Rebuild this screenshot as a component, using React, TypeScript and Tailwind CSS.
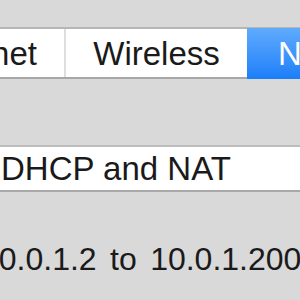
const tabs = [
  { label: 'Ethernet', width: 'w-[183px] -ml-[117px] justify-end pr-[27px] border-r-2 border-[#dedede]' },
  { label: 'Wireless', width: 'w-[181px] justify-center' },
];

export default function App() {
  return (
    <div className="w-[300px] h-[300px] overflow-hidden bg-[#d9d9d9] font-['Liberation_Sans',Arial,sans-serif] text-[33px] leading-none text-[#1a1a1a]">
      {/* segmented tab bar */}
      <div className="pt-[27px]">
        <div className="flex w-max h-[52px] bg-white border-t-2 border-b-2 border-t-[#b6b6b6] border-b-[#a7a7a7]">
          {tabs.map((t) => (
            <div key={t.label} className={`flex items-center whitespace-nowrap ${t.width}`}>
              {t.label}
            </div>
          ))}
          <div className="flex items-center w-[181px] pl-[31px] -mt-[1px] -mb-[2px] bg-gradient-to-b from-[#5fabfd] to-[#1a7ef9] text-white">
            NAT
          </div>
        </div>
      </div>

      {/* mode dropdown */}
      <div className="mt-[66px] h-[47px] flex items-center pl-[1px] bg-white border-t-2 border-b-2 border-t-[#bdbdbd] border-b-[#a9a9a9] whitespace-nowrap">
        DHCP and NAT
      </div>

      {/* address range */}
      <div className="mt-[51px] -ml-[19px] whitespace-nowrap text-[32px] [word-spacing:4.5px]">
        10.0.1.2 to 10.0.1.200
      </div>
    </div>
  );
}
